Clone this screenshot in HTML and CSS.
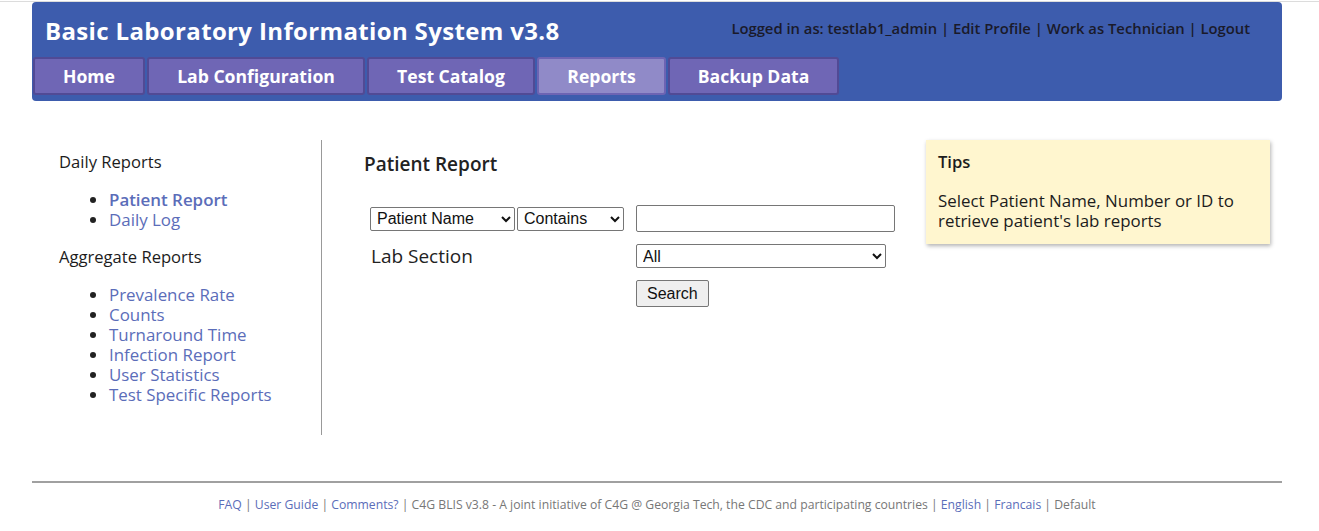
FILE: index.html
```html
<!DOCTYPE html>
<html>
<head>
<meta charset="utf-8">
<title>BLIS</title>
<link rel="stylesheet" href="styles.css">
</head>
<body>
<div class="topline"></div>
<header class="header">
  <div class="header-top">
    <div class="title">Basic Laboratory Information System v3.8</div>
    <div class="userbar"><b>Logged in as: testlab1_admin</b> | Edit Profile | Work as Technician | Logout</div>
  </div>
  <nav class="tabs">
    <a class="tab tab-home">Home</a>
    <a class="tab tab-lab">Lab Configuration</a>
    <a class="tab tab-cat">Test Catalog</a>
    <a class="tab tab-rep active">Reports</a>
    <a class="tab tab-bak">Backup Data</a>
  </nav>
</header>

<main class="main">
  <aside class="sidebar">
    <div class="group-title">Daily Reports</div>
    <ul class="links">
      <li><a class="current">Patient Report</a></li>
      <li><a>Daily Log</a></li>
    </ul>
    <div class="group-title">Aggregate Reports</div>
    <ul class="links">
      <li><a>Prevalence Rate</a></li>
      <li><a>Counts</a></li>
      <li><a>Turnaround Time</a></li>
      <li><a>Infection Report</a></li>
      <li><a>User Statistics</a></li>
      <li><a>Test Specific Reports</a></li>
    </ul>
  </aside>

  <section class="content">
    <h3 class="content-title">Patient Report</h3>
    <div class="form">
      <div class="cell selects">
        <select class="sel-field"><option>Patient Name</option></select><select class="sel-op"><option>Contains</option></select>
      </div>
      <div class="cell"><input class="txt" type="text"></div>
      <div class="cell label">Lab Section</div>
      <div class="cell"><select class="sel-section"><option>All</option></select></div>
      <div class="cell"></div>
      <div class="cell"><button class="btn">Search</button></div>
    </div>
  </section>

  <aside class="tips">
    <div class="tips-title">Tips</div>
    <p class="tips-text">Select Patient Name, Number or ID to retrieve patient's lab reports</p>
  </aside>
</main>

<footer class="footer">
  <a>FAQ</a> | <a>User Guide</a> | <a>Comments?</a> | C4G BLIS v3.8 - A joint initiative of C4G @ Georgia Tech, the CDC and participating countries | <a>English</a> | <a>Francais</a> | Default
</footer>
</body>
</html>
```

FILE: styles.css
```css
html, body {
  margin: 0;
  padding: 0;
  background: #fff;
}
body {
  font-family: "Open Sans", "DejaVu Sans", sans-serif;
  color: #1c1c1c;
  padding-top: 1px;
}
.topline {
  height: 1px;
  background: #dcdcdc;
}
.header {
  margin: 0 37px 0 32px;
  background: #3d5cad;
  border-radius: 4px;
  height: 99px;
  box-sizing: border-box;
  padding-top: 12px;
}
.header-top {
  display: flex;
  justify-content: space-between;
  align-items: flex-start;
  height: 43px;
}
.title {
  color: #fff;
  font-weight: 700;
  font-size: 24px;
  line-height: 34px;
  padding-left: 13px;
  letter-spacing: 0.35px;
}
.userbar {
  font-size: 14.8px;
  font-weight: 600;
  color: #1a1a2a;
  padding-right: 32px;
  padding-top: 4px;
  line-height: 20px;
}
.userbar b { font-weight: 600; }
.tabs {
  display: flex;
  gap: 2px;
  padding-left: 1px;
}
.tab {
  display: block;
  box-sizing: border-box;
  height: 38px;
  line-height: 34px;
  text-align: center;
  color: #fff;
  font-weight: 700;
  font-size: 17.6px;
  background: #6f66b5;
  border: 2px solid #514a95;
  border-radius: 3px;
}
.tab-home { width: 112px; }
.tab-lab { width: 218px; }
.tab-cat { width: 168px; }
.tab-rep { width: 129px; }
.tab-bak { width: 171px; }
.tab.active {
  background: #908ac8;
  border-color: #6d64b3;
}

.main {
  display: flex;
  margin: 39px 37px 0 32px;
  align-items: flex-start;
}
.sidebar {
  width: 290px;
  border-right: 1px solid #999;
  box-sizing: border-box;
  padding-left: 27px;
  padding-top: 10px;
  height: 295px;
}
.group-title {
  font-size: 16.6px;
  line-height: 24px;
}
.links {
  margin: 16px 0 15px 0;
  padding-left: 50px;
  font-size: 16.9px;
  line-height: 20px;
}
.links li::marker { color: #222; }
.links a {
  color: #5b6db9;
  cursor: pointer;
}
.links a.current { font-weight: 600; }

.content {
  width: 603px;
  padding-left: 42px;
  box-sizing: border-box;
}
.content-title {
  margin: 12px 0 0 0;
  font-size: 19px;
  line-height: 24px;
  font-weight: 600;
  color: #222;
}
.form {
  display: grid;
  grid-template-columns: 265px 260px;
  row-gap: 11px;
  margin-top: 29px;
  margin-left: 6px;
  align-items: center;
}
.cell { display: flex; align-items: center; }
.selects { gap: 2px; }
select, input, button {
  font-family: "Liberation Sans", Arial, sans-serif;
  font-size: 16px;
  color: #111;
}
select {
  height: 24px;
  border: 1px solid #767676;
  border-radius: 2px;
  background: #fff;
  padding: 0 2px;
}
.sel-field { width: 145px; }
.sel-op { width: 107px; }
.txt {
  width: 260px;
  height: 27px;
  box-sizing: border-box;
  border: 1px solid #767676;
  border-radius: 2px;
  padding: 0 4px;
  margin-left: 1px;
}
.sel-section { width: 250px; margin-left: 1px; }
.label {
  font-size: 19px;
  font-family: "Open Sans", "DejaVu Sans", sans-serif;
  color: #222;
  padding-left: 1px;
}
.btn {
  height: 27px;
  padding: 0 10px;
  margin-left: 1px;
  border: 1px solid #767676;
  border-radius: 2px;
  background: #efefef;
}

.tips {
  margin-left: 1px;
  width: 344px;
  height: 104px;
  box-sizing: border-box;
  background: #fff6cf;
  box-shadow: 1px 2px 4px rgba(0,0,0,0.3);
  padding: 11px 12px;
}
.tips-title {
  font-weight: 600;
  font-size: 16.6px;
  line-height: 22px;
}
.tips-text {
  margin: 18px 0 0 0;
  font-size: 16.9px;
  line-height: 20px;
}

.footer {
  margin: 46px 37px 0 32px;
  border-top: 2px solid #a0a0a0;
  box-shadow: 0 1px 0 #ececec;
  text-align: center;
  font-size: 12.2px;
  line-height: 18px;
  color: #777;
  padding-top: 13px;
}
.footer a { color: #5b6db9; }
```
